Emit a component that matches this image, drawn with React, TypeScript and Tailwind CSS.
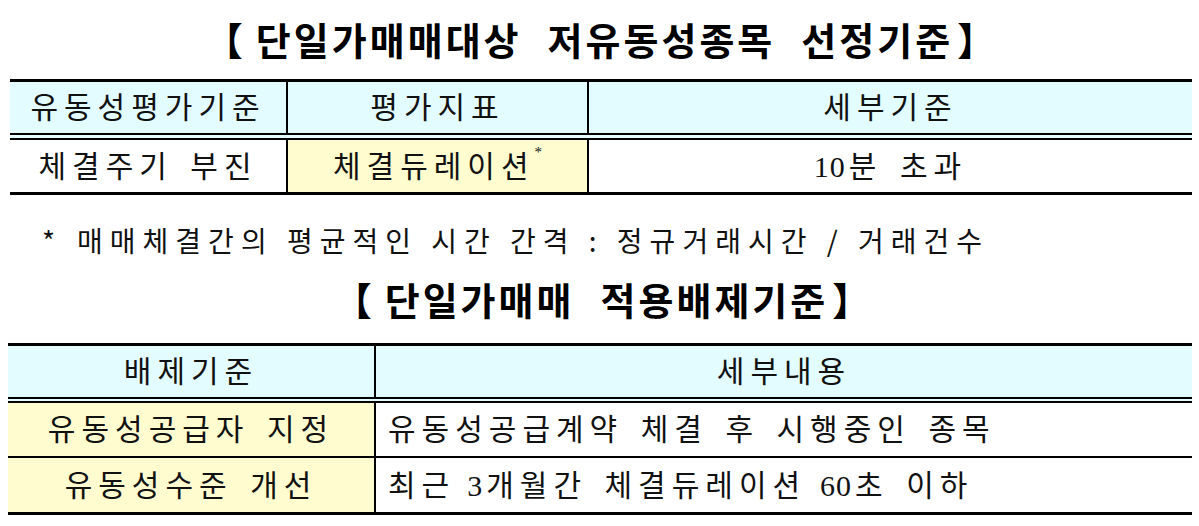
const serif = { fontFamily: '"Liberation Serif", "Noto Sans CJK KR", serif' };

const cell = "flex items-center justify-center text-[30px] tracking-[6px] [word-spacing:4px] text-[#111]";
const title = "flex items-center text-[38px] font-bold tracking-[3px] text-black leading-none";

function Num({ children }: { children: string }) {
  return <span className="tracking-[1px] mr-[3px]">{children}</span>;
}

export default function App() {
  return (
    <div className="w-[1199px] h-[526px] bg-white overflow-hidden" style={{ fontFamily: '"Noto Sans CJK KR", sans-serif' }}>
      {/* Title 1 */}
      <div className="h-[79px] flex items-center justify-center pl-[4px] pb-[2px]">
        <h1 className={title}>
          <span className="-mr-[4px]">【</span>
          <span className="ml-[14px]">단일가매매대상</span>
          <span className="ml-[26px]">저유동성종목</span>
          <span className="ml-[26px]">선정기준</span>
          <span className="ml-[4px]">】</span>
        </h1>
      </div>

      {/* Table 1 */}
      <div className="ml-[10px] w-[1182px] border-t-[3px] border-b-[3px] border-black" style={serif}>
        <div className="grid grid-cols-[278px_301px_1fr] bg-[#e3fcff] border-b-[7px] border-double border-black">
          <div className={`${cell} h-[51px] border-r-2 border-black`}>유동성평가기준</div>
          <div className={`${cell} h-[51px] border-r-2 border-black`}>평가지표</div>
          <div className={`${cell} h-[51px]`}>세부기준</div>
        </div>
        <div className="grid grid-cols-[278px_301px_1fr]">
          <div className={`${cell} h-[52px] border-r-2 border-black`}>체결주기 부진</div>
          <div className={`${cell} h-[52px] border-r-2 border-black bg-[#fffdd0]`}>
            체결듀레이션<sup className="text-[15px] top-[-14px] tracking-normal">*</sup>
          </div>
          <div className={`${cell} h-[52px]`}>
            <Num>10</Num>분 초과
          </div>
        </div>
      </div>

      {/* Footnote */}
      <div className="h-[80px] pt-[10px] flex items-center pl-[42px] text-[28px] tracking-[7px] text-[#111]">
        <span className="mr-[22px] tracking-normal">*</span>
        매매체결간의 평균적인 시간 간격 : 정규거래시간 / 거래건수
      </div>

      {/* Title 2 */}
      <div className="h-[48px] flex items-center justify-center pl-[8px]">
        <h2 className={title}>
          <span className="-mr-[4px]">【</span>
          <span className="ml-[14px]">단일가매매</span>
          <span className="ml-[26px]">적용배제기준</span>
          <span className="ml-[4px]">】</span>
        </h2>
      </div>

      {/* Table 2 */}
      <div className="mt-[20px] ml-[8px] w-[1184px] border-t-[3px] border-b-[3px] border-black" style={serif}>
        <div className="grid grid-cols-[368px_1fr] bg-[#e3fcff] border-b-[6px] border-double border-black">
          <div className={`${cell} h-[51px] border-r-2 border-black`}>배제기준</div>
          <div className={`${cell} h-[51px]`}>세부내용</div>
        </div>
        <div className="grid grid-cols-[368px_1fr] border-b-2 border-black">
          <div className={`${cell} h-[53px] border-r-2 border-black bg-[#fffdd0]`}>유동성공급자 지정</div>
          <div className={`${cell} h-[53px] !justify-start pl-[12px]`}>유동성공급계약 체결 후 시행중인 종목</div>
        </div>
        <div className="grid grid-cols-[368px_1fr]">
          <div className={`${cell} h-[54px] border-r-2 border-black bg-[#fffdd0]`}>유동성수준 개선</div>
          <div className={`${cell} h-[54px] !justify-start pl-[12px]`}>
            최근<span className="ml-[12px]" /><Num>3</Num>개월간 체결듀레이션<span className="ml-[14px]" /><Num>60</Num>초 이하
          </div>
        </div>
      </div>
    </div>
  );
}
